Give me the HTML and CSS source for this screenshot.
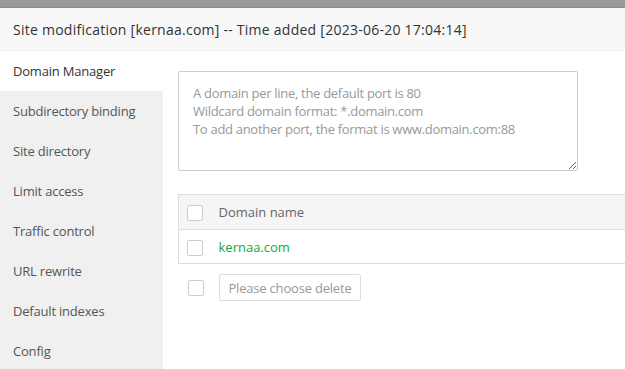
FILE: index.html
```html
<!DOCTYPE html>
<html lang="en">
<head>
  <meta charset="UTF-8">
  <title>Site modification</title>
  <link rel="stylesheet" href="styles.css">
</head>
<body>
  <div class="topbar"></div>
  <div class="title">Site modification [kernaa.com] -- Time added [2023-06-20 17:04:14]</div>
  <div class="layout">
    <ul class="menu">
      <li class="active">Domain Manager</li>
      <li>Subdirectory binding</li>
      <li>Site directory</li>
      <li>Limit access</li>
      <li>Traffic control</li>
      <li>URL rewrite</li>
      <li>Default indexes</li>
      <li>Config</li>
    </ul>
    <section class="content">
      <textarea class="domains" placeholder="A domain per line, the default port is 80&#10;Wildcard domain format: *.domain.com&#10;To add another port, the format is www.domain.com:88"></textarea>
      <table class="list">
        <thead>
          <tr>
            <th class="check"><span class="box"></span></th>
            <th>Domain name</th>
          </tr>
        </thead>
        <tbody>
          <tr>
            <td class="check"><span class="box"></span></td>
            <td><a class="domain">kernaa.com</a></td>
          </tr>
        </tbody>
      </table>
      <div class="actions">
        <span class="box"></span>
        <button class="btn">Please choose delete</button>
      </div>
    </section>
  </div>
</body>
</html>
```

FILE: styles.css
```css
* {
  box-sizing: border-box;
}
html, body {
  height: 100%;
}
body {
  margin: 0;
  overflow: hidden;
  background: #fff;
  color: #333;
  font-family: "Open Sans", "Noto Sans", sans-serif;
  font-size: 13px;
  display: flex;
  flex-direction: column;
}
.topbar {
  flex-shrink: 0;
  height: 8px;
  background: #9a9a9a;
  border-bottom: 1px solid #8a8a8a;
}
.title {
  flex-shrink: 0;
  height: 43px;
  line-height: 44px;
  padding: 0 13px;
  background: #f8f8f8;
  border-bottom: 1px solid #eee;
  font-size: 14px;
  color: #333;
  letter-spacing: 0.25px;
  white-space: nowrap;
}
.layout {
  flex: 1;
  min-height: 0;
  display: flex;
}
.menu {
  flex-shrink: 0;
  width: 163px;
  margin: 0;
  padding: 0;
  list-style: none;
  background: #f0f0f0;
}
.menu li {
  height: 40px;
  line-height: 40px;
  padding-left: 13px;
  color: #555;
  letter-spacing: -0.2px;
  white-space: nowrap;
}
.menu li.active {
  background: #fff;
  color: #333;
}
.content {
  flex: 1;
  min-width: 0;
  padding: 20px 0 0 15px;
}
.domains {
  display: block;
  width: 400px;
  height: 100px;
  padding: 12px 14px;
  border: 1px solid #ccc;
  border-radius: 2px;
  font-family: inherit;
  font-size: 13px;
  line-height: 18px;
  letter-spacing: -0.3px;
  resize: vertical;
}
.domains::placeholder {
  color: #999;
}
.list {
  margin-top: 23px;
  width: 100%;
  border-collapse: collapse;
  border: 1px solid #ddd;
  border-right: none;
}
.list th {
  height: 35px;
  background: #f5f5f5;
  text-align: left;
  font-weight: normal;
  color: #666;
  border-bottom: 1px solid #ddd;
}
.list td {
  height: 34px;
}
.list th, .list td {
  padding: 0;
  vertical-align: middle;
}
.list .check {
  width: 40px;
  padding-left: 8px;
}
.box {
  display: inline-block;
  width: 16px;
  height: 16px;
  border: 1px solid #ccc;
  border-radius: 2px;
  background: #fff;
  vertical-align: middle;
}
.domain {
  color: #20a53a;
}
.actions {
  margin-top: 10px;
  display: flex;
  align-items: center;
  gap: 15px;
  padding-left: 10px;
}
.btn {
  height: 27px;
  width: 142px;
  padding: 0;
  border: 1px solid #ddd;
  border-radius: 2px;
  background: #fff;
  color: #999;
  font-family: inherit;
  font-size: 13px;
  letter-spacing: -0.2px;
}
```
